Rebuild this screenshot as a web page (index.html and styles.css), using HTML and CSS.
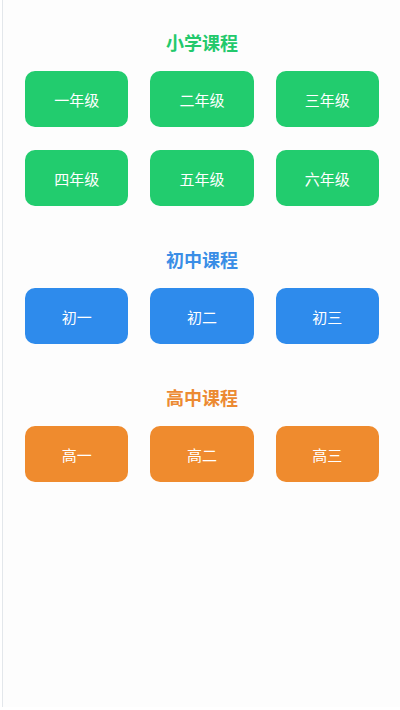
FILE: index.html
```html
<!DOCTYPE html>
<html lang="zh">
<head>
<meta charset="utf-8">
<title>课程</title>
<link rel="stylesheet" href="styles.css">
</head>
<body>
<div class="page">
  <section class="section green">
    <h2 class="title">小学课程</h2>
    <div class="grid">
      <div class="btn">一年级</div>
      <div class="btn">二年级</div>
      <div class="btn">三年级</div>
      <div class="btn">四年级</div>
      <div class="btn">五年级</div>
      <div class="btn">六年级</div>
    </div>
  </section>
  <section class="section blue">
    <h2 class="title">初中课程</h2>
    <div class="grid">
      <div class="btn">初一</div>
      <div class="btn">初二</div>
      <div class="btn">初三</div>
    </div>
  </section>
  <section class="section orange">
    <h2 class="title">高中课程</h2>
    <div class="grid">
      <div class="btn">高一</div>
      <div class="btn">高二</div>
      <div class="btn">高三</div>
    </div>
  </section>
</div>
</body>
</html>
```
FILE: styles.css
```css
html, body {
  margin: 0;
  padding: 0;
  background: #ffffff;
}
body {
  font-family: "Noto Sans CJK SC", "Noto Sans", sans-serif;
}
.page {
  margin-left: 2px;
  border-left: 1px solid #e3e7eb;
  height: 707px;
  box-sizing: border-box;
  padding: 30px 21px 0 22px;
  background: #fdfdfd;
}
.section {
  margin-bottom: 41px;
}
.title {
  margin: 0 0 17px;
  height: 24px;
  line-height: 24px;
  font-size: 18px;
  font-weight: 700;
  text-align: center;
}
.grid {
  display: grid;
  grid-template-columns: repeat(3, 1fr);
  column-gap: 22px;
  row-gap: 23px;
}
.btn {
  height: 56px;
  border-radius: 10px;
  display: flex;
  align-items: center;
  justify-content: center;
  color: #ffffff;
  font-size: 15px;
  font-weight: 400;
}
.green .title { color: #23c96c; }
.green .btn { background: #22cc6e; }
.blue .title { color: #3a8ee6; }
.blue .btn { background: #2e8bec; }
.orange .title { color: #ec8a32; }
.orange .btn { background: #ef8b2e; }
```
